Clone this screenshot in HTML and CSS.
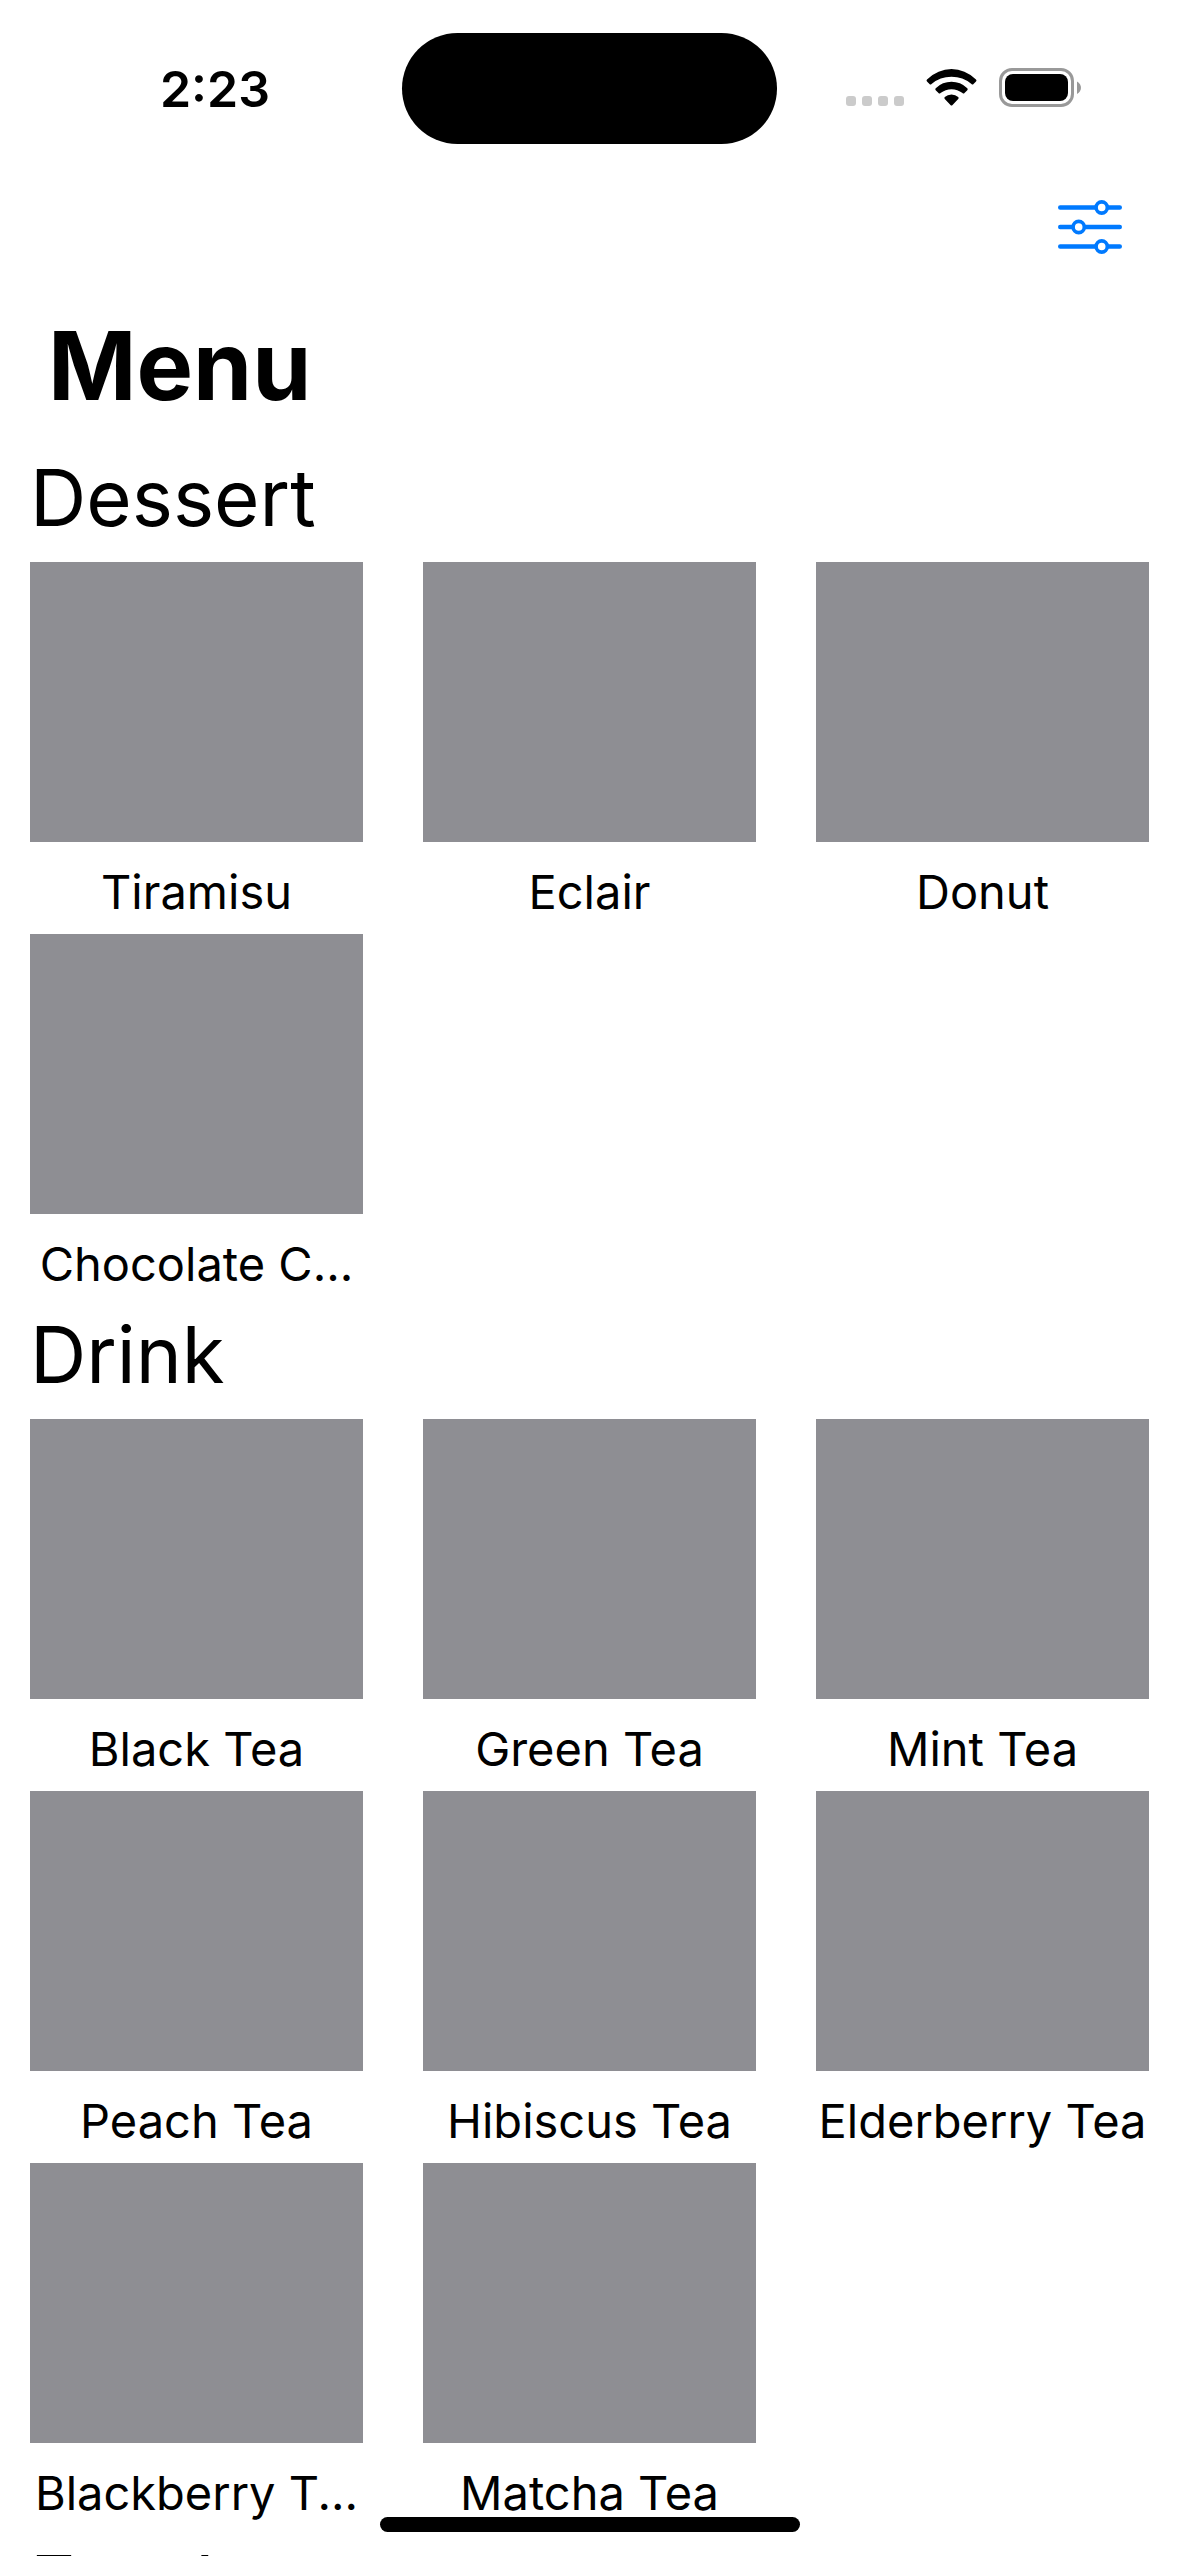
FILE: index.html
```html
<!DOCTYPE html>
<html lang="en">
<head>
<meta charset="utf-8">
<meta name="viewport" content="width=device-width, initial-scale=1">
<title>Menu</title>
<link rel="stylesheet" href="styles.css">
</head>
<body>
<div class="screen">
  <header class="status">
    <div class="status-side status-left"><time class="clock">2:23</time></div>
    <div class="island"></div>
    <div class="status-side status-right">
      <svg class="status-icons" width="240" height="45" viewBox="0 0 240 45" aria-hidden="true">
        <g fill="#cbcbcb">
          <rect x="0" y="30" width="10" height="10" rx="3"/>
          <rect x="16" y="30" width="10" height="10" rx="3"/>
          <rect x="32" y="30" width="10" height="10" rx="3"/>
          <rect x="48" y="30" width="10" height="10" rx="3"/>
        </g>
        <path d="M81 13.500Q92 3 105.500 3T130 13.500Q131 14.500 130 15.500L127.500 18Q126.500 19 125.500 18Q117 10.800 105.500 10.800T85.500 18Q84.500 19 83.500 18L81 15.500Q80 14.500 81 13.500ZM89.700 22.200Q96.500 15.800 105.500 15.800T121.300 22.200Q122.200 23.200 121.300 24.200L118.500 27Q117.500 28 116.500 27Q111.500 23.200 105.500 23.200T94.500 27Q93.500 28 92.500 27L89.700 24.200Q88.800 23.200 89.700 22.200ZM98.800 31Q101.500 28.500 105.500 28.500T112.200 31Q113.200 32 112.200 33L106.300 39.200Q105.500 40 104.700 39.200L98.800 33Q97.800 32 98.800 31Z"/>
        <rect x="154.500" y="3.500" width="72" height="36" rx="11.500" fill="none" stroke="#999" stroke-width="3"/>
        <rect x="159" y="8" width="63" height="27" rx="8"/>
        <path d="M231 15.500C236.300 18 236.300 25.500 231 28Z" fill="#999"/>
      </svg>
    </div>
  </header>
  <nav class="toolbar">
    <button class="filter" type="button" aria-label="Filter">
      <svg width="64" height="54" viewBox="0 0 64 54" fill="none" stroke="#007aff" stroke-linecap="round" aria-hidden="true">
        <path d="M2.200 7.500H37M50.500 7.500H61.800M2.200 27H14M27.500 27H61.800M2.200 46.500H37M50.500 46.500H61.800" stroke-width="4.400"/>
        <g stroke-width="3.600"><circle cx="43.700" cy="7.500" r="5.600"/><circle cx="20.700" cy="27" r="5.600"/><circle cx="43.700" cy="46.500" r="5.600"/></g>
      </svg>
    </button>
  </nav>
  <main class="content">
    <h1 class="title">Menu</h1>
    <section>
      <h2 class="heading">Dessert</h2>
      <ul class="grid">
        <li class="item"><div class="photo"></div><p class="name">Tiramisu</p></li>
        <li class="item"><div class="photo"></div><p class="name">Eclair</p></li>
        <li class="item"><div class="photo"></div><p class="name">Donut</p></li>
        <li class="item"><div class="photo"></div><p class="name">Chocolate C...</p></li>
      </ul>
    </section>
    <section>
      <h2 class="heading">Drink</h2>
      <ul class="grid">
        <li class="item"><div class="photo"></div><p class="name">Black Tea</p></li>
        <li class="item"><div class="photo"></div><p class="name">Green Tea</p></li>
        <li class="item"><div class="photo"></div><p class="name">Mint Tea</p></li>
        <li class="item"><div class="photo"></div><p class="name">Peach Tea</p></li>
        <li class="item"><div class="photo"></div><p class="name">Hibiscus Tea</p></li>
        <li class="item"><div class="photo"></div><p class="name">Elderberry Tea</p></li>
        <li class="item"><div class="photo"></div><p class="name">Blackberry T...</p></li>
        <li class="item"><div class="photo"></div><p class="name">Matcha Tea</p></li>
      </ul>
    </section>
    <section>
      <h2 class="heading">Food</h2>
    </section>
  </main>
  <div class="home-indicator"></div>
</div>
</body>
</html>
```

FILE: styles.css
```css
* {
  box-sizing: border-box;
}

body {
  margin: 0;
  background: #fff;
  color: #000;
  font-family: Inter, "Liberation Sans", sans-serif;
}

.screen {
  position: relative;
  display: flex;
  flex-direction: column;
  height: 100vh;
  overflow: hidden;
}

.status {
  display: grid;
  grid-template-columns: 1fr 375px 1fr;
  align-items: center;
  flex: none;
  padding-top: 33px;
}

.status-side {
  display: flex;
  justify-content: center;
}

.status-left {
  padding-left: 28px;
}

.status-right {
  padding-right: 24px;
}

.clock {
  font-size: 50px;
  line-height: 60px;
  font-weight: 600;
}

.island {
  height: 111px;
  border-radius: 56px;
  background: #000;
}

.status-icons {
  flex: none;
}

.toolbar {
  display: flex;
  justify-content: flex-end;
  flex: none;
  padding: 56px 57px 0;
}

.filter {
  display: flex;
  padding: 0;
  border: 0;
  background: none;
}

.content {
  flex: 1;
  min-height: 0;
  padding: 52px 30px 0;
  overflow: hidden;
}

.title {
  margin: 0;
  padding: 0 18px;
  font-size: 95px;
  line-height: 120px;
  font-weight: 700;
}

.heading {
  margin: 0;
  padding-bottom: 15px;
  font-size: 78px;
  line-height: 98px;
  font-weight: 400;
}

.title + section {
  padding-top: 23px;
}

.grid {
  display: grid;
  grid-template-columns: repeat(3, 1fr);
  column-gap: 60px;
  margin: 0;
  padding: 0;
  list-style: none;
}

.item {
  min-width: 0;
}

.photo {
  height: 280px;
  background: #8e8e93;
}

.name {
  margin: 0;
  padding: 20px 0 12px;
  font-size: 47px;
  line-height: 60px;
  text-align: center;
  white-space: nowrap;
}

.home-indicator {
  position: absolute;
  bottom: 24px;
  left: 50%;
  width: 420px;
  height: 15px;
  margin-left: -210px;
  border-radius: 8px;
  background: #000;
}
```
